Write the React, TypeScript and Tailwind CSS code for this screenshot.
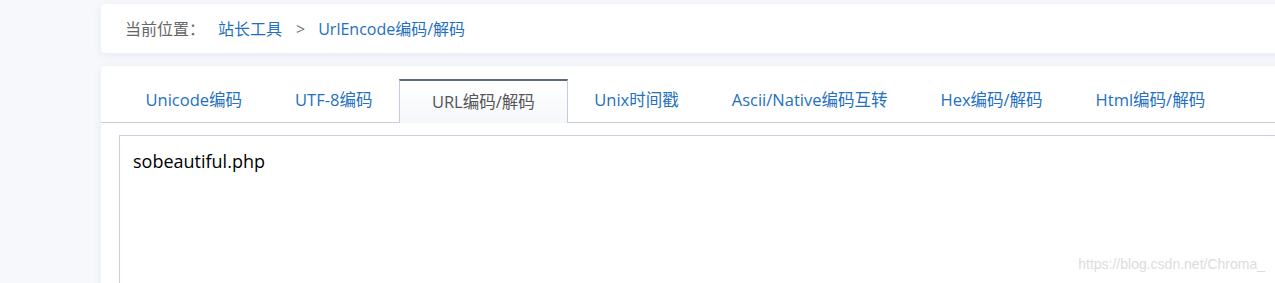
const tabs = [
  "Unicode编码",
  "UTF-8编码",
  "URL编码/解码",
  "Unix时间戳",
  "Ascii/Native编码互转",
  "Hex编码/解码",
  "Html编码/解码",
];

const font = { fontFamily: '"Open Sans", "Noto Sans CJK SC", sans-serif' };

function App() {
  return (
    <div
      className="relative h-[283px] w-full overflow-hidden bg-[#f6f8fb] pl-[101px] pt-[4px]"
      style={font}
    >
      <div className="w-[1250px]">
        {/* breadcrumb */}
        <div className="flex h-[49px] items-center rounded bg-white pl-[24px] text-[16px] shadow-[0_2px_10px_rgba(30,70,140,0.08)]">
          <span className="text-[#666]">当前位置：</span>
          <span className="ml-[13px] text-[#1f6fc0]">站长工具</span>
          <span className="ml-[14px] text-[#777]">&gt;</span>
          <span className="ml-[13px] text-[#1f6fc0]">UrlEncode编码/解码</span>
        </div>

        {/* tool card */}
        <div className="mt-[13px] h-[300px] rounded-t bg-white shadow-[0_2px_10px_rgba(30,70,140,0.08)]">
          <div className="flex h-[57px] items-end border-b border-[#c8d0e0] pl-[18px]">
            {tabs.map((t, i) =>
              i === 2 ? (
                <div
                  key={t}
                  className="-mb-px flex h-[44px] items-center border-x border-t-2 border-x-[#c3cbdc] border-t-[#5b6a83] bg-gradient-to-b from-white to-[#f5f7fb] px-[32px] text-[16.5px] text-[#555]"
                >
                  {t}
                </div>
              ) : (
                <div
                  key={t}
                  className="flex h-[44px] items-center px-[26.5px] text-[16.5px] text-[#2370c0]"
                >
                  {t}
                </div>
              )
            )}
          </div>
          <div className="pl-[18px] pt-[12px]">
            <div className="h-[200px] border border-[#c8d0e0] pl-[13px] pt-[12px] text-[18px] leading-[26px] text-black">
              sobeautiful.php
            </div>
          </div>
        </div>
      </div>

      {/* watermark */}
      <div
        className="absolute bottom-[8px] right-[10px] text-[14px] text-[#dcdcdc]"
        style={{ fontFamily: '"Liberation Sans", Arial, sans-serif' }}
      >
        https://blog.csdn.net/Chroma_
      </div>
    </div>
  );
}

export default App;
